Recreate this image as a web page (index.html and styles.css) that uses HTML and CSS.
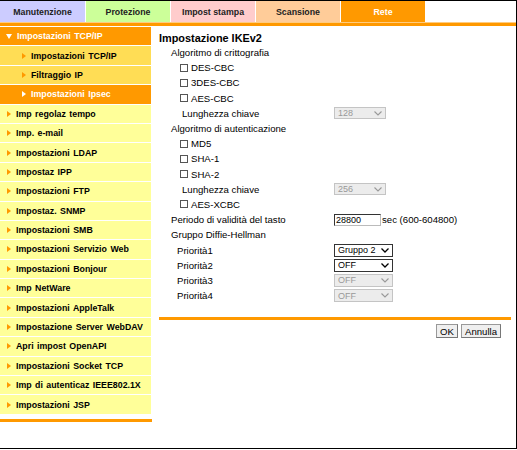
FILE: index.html
```html
<!DOCTYPE html>
<html lang="it">
<head>
    <meta charset="UTF-8">
    <title>Impostazione IKEv2</title>
    <link rel="stylesheet" href="styles.css">
</head>
<body>
<div class="frame">
    <div class="tabs">
        <div class="tab tab-maint">Manutenzione</div>
        <div class="tab tab-prot">Protezione</div>
        <div class="tab tab-print">Impost stampa</div>
        <div class="tab tab-scan">Scansione</div>
        <div class="tab tab-net">Rete</div>
    </div>
    <div class="tabs-line"></div>

    <div class="main">
        <ul class="nav">
            <li class="nav-item open">Impostazioni TCP/IP</li>
            <li class="nav-item sub">Impostazioni TCP/IP</li>
            <li class="nav-item sub">Filtraggio IP</li>
            <li class="nav-item sub active">Impostazioni Ipsec</li>
            <li class="nav-item">Imp regolaz tempo</li>
            <li class="nav-item">Imp. e-mail</li>
            <li class="nav-item">Impostazioni LDAP</li>
            <li class="nav-item">Impostaz IPP</li>
            <li class="nav-item">Impostazioni FTP</li>
            <li class="nav-item">Impostaz. SNMP</li>
            <li class="nav-item">Impostazioni SMB</li>
            <li class="nav-item">Impostazioni Servizio Web</li>
            <li class="nav-item">Impostazioni Bonjour</li>
            <li class="nav-item">Imp NetWare</li>
            <li class="nav-item">Impostazioni AppleTalk</li>
            <li class="nav-item">Impostazione Server WebDAV</li>
            <li class="nav-item">Apri impost OpenAPI</li>
            <li class="nav-item">Impostazioni Socket TCP</li>
            <li class="nav-item">Imp di autenticaz IEEE802.1X</li>
            <li class="nav-item">Impostazioni JSP</li>
        </ul>

        <div class="content">
            <h1 class="title">Impostazione IKEv2</h1>

            <div class="row"><span class="lbl lv1">Algoritmo di crittografia</span></div>
            <div class="row"><label class="lbl lv2"><span class="chk"></span>DES-CBC</label></div>
            <div class="row"><label class="lbl lv2"><span class="chk"></span>3DES-CBC</label></div>
            <div class="row"><label class="lbl lv2"><span class="chk"></span>AES-CBC</label></div>
            <div class="row">
                <span class="lbl lv3">Lunghezza chiave</span>
                <div class="sel short disabled"><span>128</span>
                    <svg width="8" height="5" viewBox="0 0 8 5"><path d="M0.5 0.5 L4 4 L7.5 0.5" fill="none" stroke="currentColor" stroke-width="1.1"/></svg>
                </div>
            </div>

            <div class="row"><span class="lbl lv1">Algoritmo di autenticazione</span></div>
            <div class="row"><label class="lbl lv2"><span class="chk"></span>MD5</label></div>
            <div class="row"><label class="lbl lv2"><span class="chk"></span>SHA-1</label></div>
            <div class="row"><label class="lbl lv2"><span class="chk"></span>SHA-2</label></div>
            <div class="row">
                <span class="lbl lv3">Lunghezza chiave</span>
                <div class="sel short disabled"><span>256</span>
                    <svg width="8" height="5" viewBox="0 0 8 5"><path d="M0.5 0.5 L4 4 L7.5 0.5" fill="none" stroke="currentColor" stroke-width="1.1"/></svg>
                </div>
            </div>
            <div class="row"><label class="lbl lv2"><span class="chk"></span>AES-XCBC</label></div>

            <div class="row">
                <span class="lbl lv1">Periodo di validità del tasto</span>
                <div class="field"><span class="input">28800</span><span class="unit">sec (600-604800)</span></div>
            </div>

            <div class="row"><span class="lbl lv1">Gruppo Diffie-Hellman</span></div>
            <div class="row">
                <span class="lbl lvp">Priorità1</span>
                <div class="sel"><span>Gruppo 2</span>
                    <svg width="8" height="5" viewBox="0 0 8 5"><path d="M0.5 0.5 L4 4 L7.5 0.5" fill="none" stroke="currentColor" stroke-width="1.3"/></svg>
                </div>
            </div>
            <div class="row">
                <span class="lbl lvp">Priorità2</span>
                <div class="sel"><span>OFF</span>
                    <svg width="8" height="5" viewBox="0 0 8 5"><path d="M0.5 0.5 L4 4 L7.5 0.5" fill="none" stroke="currentColor" stroke-width="1.3"/></svg>
                </div>
            </div>
            <div class="row">
                <span class="lbl lvp">Priorità3</span>
                <div class="sel disabled"><span>OFF</span>
                    <svg width="8" height="5" viewBox="0 0 8 5"><path d="M0.5 0.5 L4 4 L7.5 0.5" fill="none" stroke="currentColor" stroke-width="1.1"/></svg>
                </div>
            </div>
            <div class="row">
                <span class="lbl lvp">Priorità4</span>
                <div class="sel disabled"><span>OFF</span>
                    <svg width="8" height="5" viewBox="0 0 8 5"><path d="M0.5 0.5 L4 4 L7.5 0.5" fill="none" stroke="currentColor" stroke-width="1.1"/></svg>
                </div>
            </div>

            <div class="form-end"></div>
            <div class="buttons">
                <button class="btn">OK</button>
                <button class="btn">Annulla</button>
            </div>
        </div>
    </div>
</div>
</body>
</html>
```

FILE: styles.css
```css
*, ::before, ::after {
    box-sizing: border-box;
}

* {
    margin: 0;
    padding: 0;
}

body {
    background: #fff;
    font-family: "Liberation Sans", Arial, sans-serif;
    color: #000;
}

.frame {
    width: 517px;
    height: 449px;
    border-top: 1px solid #000;
    border-right: 1px solid #000;
    border-bottom: 1px solid #000;
    background: #fff;
}

/* top tabs */
.tabs {
    display: flex;
    gap: 1px;
    height: 21px;
}

.tab {
    display: flex;
    align-items: center;
    justify-content: center;
    width: 84px;
    font-size: 8.8px;
    font-weight: bold;
    color: #222;
}

.tab-maint { background: #ccccff; width: 85px; }
.tab-prot { background: #ccff99; }
.tab-print { background: #ffcccc; }
.tab-scan { background: #ffcc99; }
.tab-net { background: #ff9900; color: #fff; }

.tabs-line {
    height: 4px;
    border-top: 1px solid #ffcc80;
    background: #ff9900;
    margin-bottom: 1px;
}

.main {
    display: flex;
    align-items: flex-start;
}

/* left menu */
.nav {
    list-style: none;
    width: 152px;
    padding-bottom: 4px;
    border-bottom: 3px solid #ff9900;
}

.nav-item {
    display: flex;
    align-items: center;
    gap: 5px;
    height: 19.4px;
    margin-right: 1px;
    padding-left: 7px;
    border-bottom: 1px solid #fff;
    background: #ffff99;
    font-size: 8.8px;
    font-weight: bold;
    word-spacing: 1px;
    white-space: nowrap;
}

.nav-item::before {
    content: "";
    border-left: 4px solid #ff9900;
    border-top: 3px solid transparent;
    border-bottom: 3px solid transparent;
}

.nav-item.sub {
    padding-left: 22px;
    background: #ffdd55;
}

.nav-item.open,
.nav-item.active {
    background: #ff9900;
    color: #fff;
}

.nav-item.open {
    padding-left: 6px;
    gap: 5px;
}

.nav-item.open::before {
    border-top: 5px solid #fff;
    border-left: 3px solid transparent;
    border-right: 3px solid transparent;
    border-bottom: 0;
}

.nav-item.active::before {
    border-left-color: #fff;
}

/* form area */
.content {
    width: 352px;
    margin-left: 7px;
    font-size: 9.6px;
}

.title {
    padding-top: 5px;
    line-height: 13px;
    font-size: 10.9px;
    font-weight: bold;
}

.row {
    display: grid;
    grid-template-columns: 175px auto;
    align-items: center;
    height: 15.2px;
}

.lbl {
    display: flex;
    align-items: center;
    white-space: nowrap;
}

.lv1 { padding-left: 12px; }
.lv2 { padding-left: 21px; }
.lv3 { padding-left: 23px; }
.lvp { padding-left: 18px; }

.chk {
    width: 8px;
    height: 8px;
    margin-right: 3px;
    border: 1px solid #555;
    background: #fff;
}

.sel {
    display: flex;
    align-items: center;
    justify-content: space-between;
    width: 59px;
    height: 13px;
    padding: 0 3px 0 3px;
    border: 1px solid #333;
    background: #fff;
    color: #000;
    font-size: 9px;
}

.sel.short {
    width: 52px;
    height: 12px;
}

.sel.disabled {
    border-color: #c4c4c4;
    background: #ececec;
    color: #999;
}

.field {
    display: flex;
    align-items: center;
}

.input {
    width: 47px;
    height: 12px;
    line-height: 10px;
    padding-left: 1px;
    border: 1px solid;
    border-color: #333 #bbb #bbb #333;
    font-size: 9px;
}

.unit {
    margin-left: 1px;
}

.form-end {
    height: 3px;
    margin-top: 14px;
    background: #ff9900;
}

.buttons {
    display: flex;
    justify-content: flex-end;
    gap: 3px;
    padding-right: 10px;
    margin-top: 4px;
}

.btn {
    height: 14px;
    padding: 0 3px;
    border: 1px solid #999;
    border-right-color: #777;
    border-bottom-color: #777;
    background: #efefef;
    font-family: "Liberation Sans", Arial, sans-serif;
    font-size: 9.6px;
    color: #000;
}
```
